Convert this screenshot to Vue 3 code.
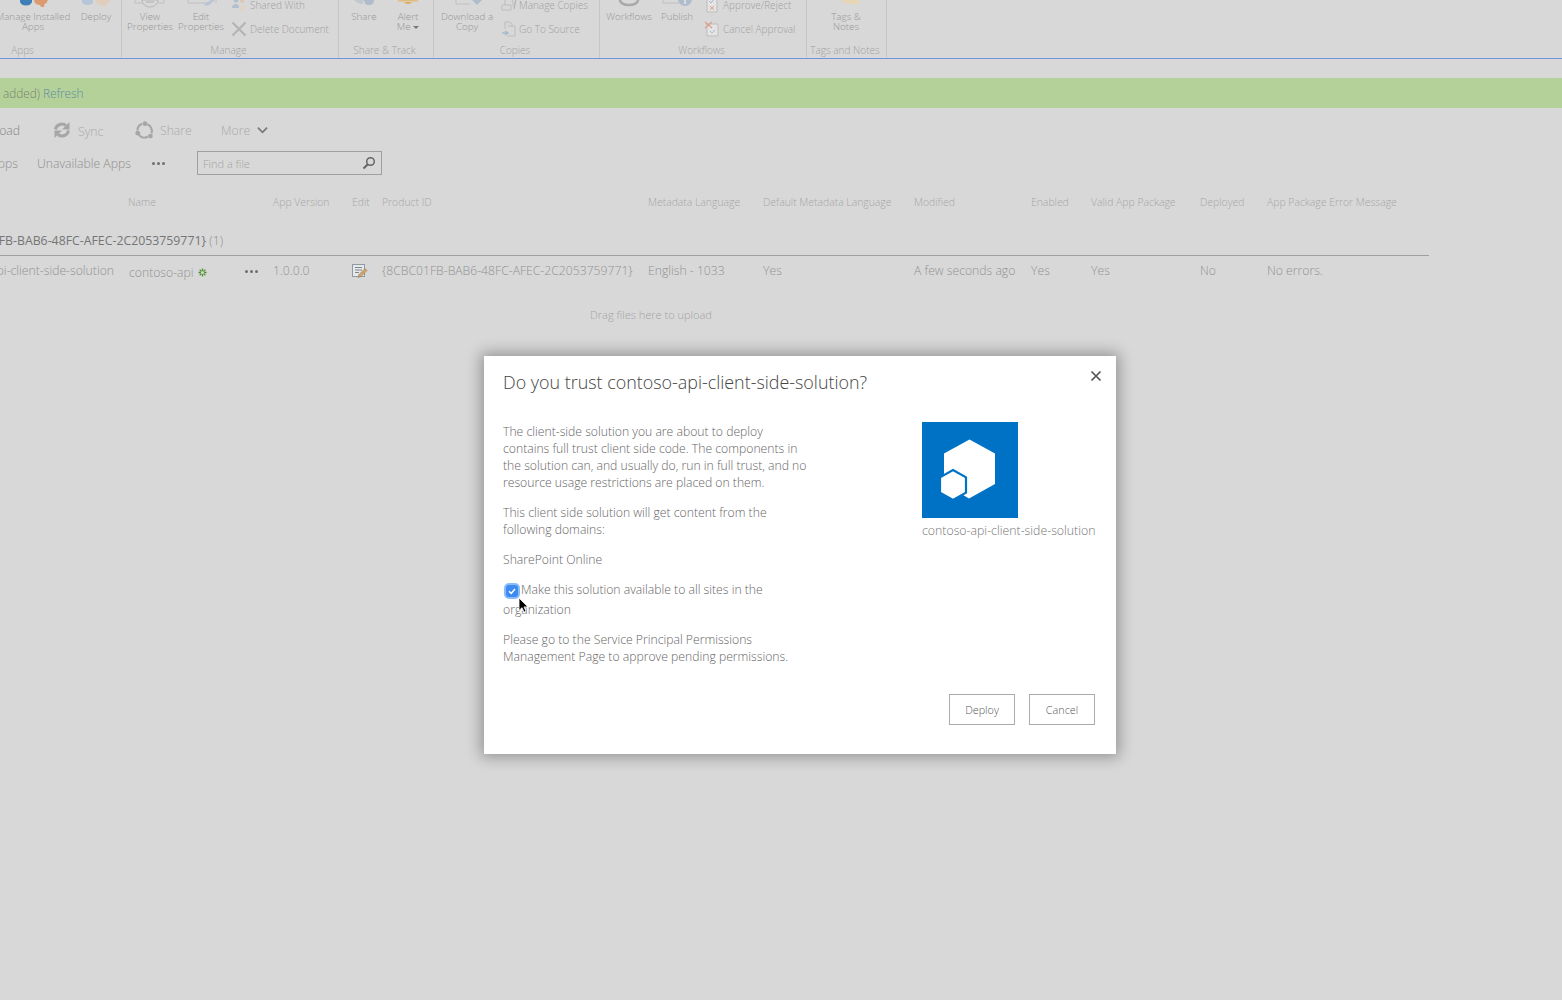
<script setup>
const columns = [
  { label: '', value: 'contoso-api-client-side-solution' },
  { label: 'Name', value: 'contoso-api' },
  { label: 'App Version', value: '1.0.0.0' },
  { label: 'Edit', value: '' },
  { label: 'Product ID', value: '{8CBC01FB-BAB6-48FC-AFEC-2C2053759771}' },
  { label: 'Metadata Language', value: 'English - 1033' },
  { label: 'Default Metadata Language', value: 'Yes' },
  { label: 'Modified', value: 'A few seconds ago' },
  { label: 'Enabled', value: 'Yes' },
  { label: 'Valid App Package', value: 'Yes' },
  { label: 'Deployed', value: 'No' },
  { label: 'App Package Error Message', value: 'No errors.' },
]
</script>

<template>
  <div class="page">
    <header class="ribbon">
      <section class="group g-apps">
        <div class="items">
          <div class="large w-manage">
            <svg class="top-icon" viewBox="0 0 32 10"><path d="M3 0h12v1.500a6 4 0 0 1-12 0z" fill="#3f7fb8"/><path d="M17 0h14l-1.500 3-2 1-.5 3h-3l-1-2-3-.5-2-1.500z" fill="#dc9a70"/></svg>
            <span class="cap nowrap">Manage Installed<br>Apps</span>
          </div>
          <div class="large w-deploy">
            <svg class="top-icon" viewBox="0 0 32 10"><path d="M2 0h11v2a5.500 3 0 0 1-11 0z" fill="#b4c6d8"/><path d="M15 0h15l-1.500 3-2 1-.5 2.500h-3l-1-1.500-3-.5-2-1.500z" fill="#e0cdbc"/></svg>
            <span class="cap">Deploy</span>
          </div>
        </div>
        <div class="name">Apps</div>
      </section>

      <section class="group g-manage">
        <div class="items">
          <div class="large w-view">
            <svg class="top-icon" viewBox="0 0 32 10"><path d="M1 0v3h12M30 0v3H24" fill="none" stroke="#c0c0c0"/><path d="M8 0a8 7 0 0 0 16 0z" fill="#d8d8d8" stroke="#b8b8b8"/><path d="M12 2h8" stroke="#b0b0b0"/></svg>
            <span class="cap">View<br>Properties</span>
          </div>
          <div class="large w-edit">
            <svg class="top-icon" viewBox="0 0 32 10"><path d="M3 0v3h20M31 0v3" fill="none" stroke="#c0c0c0"/><path d="M19 6l2-3 5-3h4l-6 5z" fill="#b9c5d4"/></svg>
            <span class="cap">Edit<br>Properties</span>
          </div>
          <div class="stack">
            <div class="small">
              <svg class="small-icon" viewBox="0 0 16 16"><circle cx="5" cy="3" r="2.500" fill="#b3bfcc"/><path d="M1 11c0-3 2-4 4-4s3 1 3 4z" fill="#b3bfcc"/><circle cx="11" cy="4" r="2" fill="#dcc9b5"/><path d="M8 13l5-6 2 1-5 6z" fill="#e2d3bf"/></svg>
              <span>Shared With</span>
            </div>
            <div class="small">
              <svg class="small-icon" viewBox="0 0 16 16"><path d="M1.500 1.500l13 13M14.500 1.500l-13 13" stroke="#b4b4b4" stroke-width="2.200"/></svg>
              <span>Delete Document</span>
            </div>
          </div>
        </div>
        <div class="name">Manage</div>
      </section>

      <section class="group g-share">
        <div class="items">
          <div class="large w-sh">
            <svg class="top-icon" viewBox="0 0 32 10"><path d="M6 0c2 2 5 4 9 4 0-2 0-3 1-4z" fill="#c2c8ce"/><path d="M16 0h10c0 3-2 5-5 5s-5-2-5-5z" fill="#aebccb"/></svg>
            <span class="cap">Share</span>
          </div>
          <div class="large w-alert">
            <svg class="top-icon" viewBox="0 0 32 10"><path d="M7 0h18l2 1.500H5z" fill="#e0bd7c"/><path d="M12 2h8l-2 2h-4z" fill="#d9b16a"/></svg>
            <span class="cap">Alert<br>Me <i class="caret"></i></span>
          </div>
        </div>
        <div class="name">Share &amp; Track</div>
      </section>

      <section class="group g-copies">
        <div class="items">
          <div class="large w-dl">
            <svg class="top-icon" viewBox="0 0 32 10"><path d="M5 0v4h14" fill="none" stroke="#c0c0c0"/><path d="M21 0h10l-5 5z" fill="#aebccb"/></svg>
            <span class="cap nowrap">Download a<br>Copy</span>
          </div>
          <div class="stack">
            <div class="small tight">
              <svg class="small-icon" viewBox="0 0 16 16"><path d="M1 13V8h9v5zM4 8V2h6l2 2v5" fill="none" stroke="#bdbdbd"/><path d="M13 12l2-10" stroke="#b4b4b4" stroke-width="1.300"/></svg>
              <span>Manage Copies</span>
            </div>
            <div class="small tight">
              <svg class="small-icon" viewBox="0 0 16 16"><path d="M4 8V1h5l2 2v3M7 5h7v10H6" fill="none" stroke="#bdbdbd"/><path d="M1 12h5M4 10l3 2-3 2" fill="none" stroke="#a8b9cc" stroke-width="1.400"/></svg>
              <span>Go To Source</span>
            </div>
          </div>
        </div>
        <div class="name">Copies</div>
      </section>

      <section class="group g-flows">
        <div class="items">
          <div class="large w-wf">
            <svg class="top-icon" viewBox="0 0 32 10"><path d="M7 0a9 5 0 0 0 18 0" fill="none" stroke="#a9a9a9" stroke-width="2.500"/></svg>
            <span class="cap">Workflows</span>
          </div>
          <div class="large w-pub">
            <svg class="top-icon" viewBox="0 0 32 10"><path d="M2 0v3h16" fill="none" stroke="#c0c0c0"/><circle cx="24" cy="-1" r="7" fill="#aebccb"/><path d="M24 0v4" stroke="#e6e6e6" stroke-width="1.500"/></svg>
            <span class="cap">Publish</span>
          </div>
          <div class="stack">
            <div class="small wide">
              <svg class="small-icon" viewBox="0 0 16 16"><path d="M3 2h10v13H3z" fill="#e4e4e4" stroke="#bdbdbd"/><path d="M5 4l2 2 3-4" fill="none" stroke="#a8b9cc"/><path d="M6 9l4 4M10 9l-4 4" stroke="#dba08c"/></svg>
              <span>Approve/Reject</span>
            </div>
            <div class="small wide">
              <svg class="small-icon" viewBox="0 0 16 16"><path d="M3 3h11v12H3z" fill="#e4e4e4" stroke="#bdbdbd"/><path d="M1 1l7 6M8 1L1 7" stroke="#dba08c" stroke-width="1.300"/><path d="M6 10l2 2 3-3" fill="none" stroke="#a8b9cc"/></svg>
              <span>Cancel Approval</span>
            </div>
          </div>
        </div>
        <div class="name">Workflows</div>
      </section>

      <section class="group g-tags">
        <div class="items">
          <div class="large w-tags">
            <svg class="top-icon" viewBox="0 0 32 10"><path d="M2 0h8l6 3V0z" fill="#e4d5b8"/><path d="M16 0h13v4H16z" fill="#e6d6b4"/></svg>
            <span class="cap">Tags &amp;<br>Notes</span>
          </div>
        </div>
        <div class="name nowrap">Tags and Notes</div>
      </section>
    </header>

    <div class="notice">
      <span class="clip-left notice-left">added)</span>
      <a class="link">Refresh</a>
    </div>

    <div class="commands">
      <span class="clip-left cmd-upload">Upload</span>
      <span class="cmd cmd-sync">
        <svg class="cmd-icon" viewBox="0 0 18 18">
          <path d="M2.500 8.500A6.500 6.500 0 0 1 13 4.500" fill="none" stroke="#a6a6a6" stroke-width="3"/>
          <path d="M16.500 1v7.500H9z" fill="#a6a6a6"/>
          <path d="M15.500 9.500A6.500 6.500 0 0 1 5 13.500" fill="none" stroke="#a6a6a6" stroke-width="3"/>
          <path d="M1.500 17V9.500H9z" fill="#a6a6a6"/>
        </svg>
        <span class="sync-text">Sync</span>
      </span>
      <span class="cmd cmd-share">
        <svg class="cmd-icon share-icon" viewBox="0 0 20 20">
          <path d="M13 3.500A7.500 7.500 0 0 1 17.300 13M13.500 16.600A7.500 7.500 0 0 1 4.200 14.500M2.600 10A7.500 7.500 0 0 1 7.500 3" fill="none" stroke="#a6a6a6" stroke-width="2.200"/>
          <circle cx="10.500" cy="2.800" r="2.500" fill="#a6a6a6"/>
          <circle cx="2.900" cy="12.800" r="2.500" fill="#a6a6a6"/>
          <circle cx="16.200" cy="15.800" r="2.500" fill="#a6a6a6"/>
        </svg>
        <span class="faint">Share</span>
      </span>
      <span class="cmd cmd-more">
        <span class="faint">More</span>
        <svg class="chev" viewBox="0 0 12 8"><path d="M1 1.500l5 5 5-5" fill="none" stroke="#777" stroke-width="1.800"/></svg>
      </span>
    </div>

    <div class="tabs">
      <span class="clip-left tab-apps">Apps</span>
      <span class="tab-un">Unavailable Apps</span>
      <span class="dots tab-dots"><i></i><i></i><i></i></span>
      <div class="search">
        <span>Find a file</span>
        <svg class="lens" viewBox="0 0 14 14"><circle cx="8.500" cy="5.500" r="3.800" fill="none" stroke="#666" stroke-width="1.500"/><path d="M5.800 8.200L1.500 12.500" stroke="#666" stroke-width="2"/></svg>
      </div>
    </div>

    <div class="grid head">
      <span v-for="c in columns" :key="c.label">{{ c.label }}</span>
    </div>

    <div class="group-row">
      <span class="clip-left group-title"><span>Product ID: {8CBC01FB-BAB6-48FC-AFEC-2C2053759771}</span>&nbsp;<em>(1)</em></span>
    </div>

    <div class="grid row">
      <span class="clip-left first-cell">{{ columns[0].value }}</span>
      <span class="name-cell">
        <span class="name-text">contoso-api</span>
        <svg class="new" viewBox="0 0 10 10"><g stroke="#4e8f2f" stroke-width="1.400"><path d="M5 .5v9M.5 5h9M1.800 1.800l6.400 6.400M8.200 1.800L1.800 8.200"/></g><circle cx="5" cy="5" r="1.700" fill="#d8d8d8"/></svg>
        <span class="dots row-dots"><i></i><i></i><i></i></span>
      </span>
      <span>{{ columns[2].value }}</span>
      <span class="edit-cell">
        <svg class="edit" viewBox="0 0 16 15"><rect x=".5" y=".5" width="12" height="12" fill="#e8e8e8" stroke="#8d9aa8"/><path d="M3 3.500h7M3 6h7M3 8.500h4" stroke="#7c8794"/><path d="M6 13.500l1-3 6-6 2 2-6 6z" fill="#d3a468" stroke="#8a7a5c" stroke-width=".6"/></svg>
      </span>
      <span v-for="c in columns.slice(4)" :key="c.label">{{ c.value }}</span>
    </div>

    <div class="drop">Drag files here to upload</div>

    <div class="dialog" role="dialog">
      <svg class="close" viewBox="0 0 12 12"><path d="M1.500 1.500l9 9M10.500 1.500l-9 9" stroke="#555" stroke-width="1.700"/></svg>
      <h1 class="title">Do you trust contoso-api-client-side-solution?</h1>
      <div class="content">
        <div class="copy">
          <p>The client-side solution you are about to deploy contains full trust client side code. The components in the solution can, and usually do, run in full trust, and no resource usage restrictions are placed on them.</p>
          <p>This client side solution will get content from the following domains:</p>
          <p>SharePoint Online</p>
          <p class="check-line">
            <span class="check">
              <svg viewBox="0 0 10 10"><path d="M2 5.200l2.200 2.200L8 3" fill="none" stroke="#fff" stroke-width="1.500"/></svg>
            </span>Make this solution available to all sites in the organization
            <svg class="cursor" viewBox="0 0 11 17"><path d="M1 1v12.500l3-2.800 2 4.500 2-1-2-4.300h4z" fill="#000" stroke="#fff" stroke-width=".8"/></svg>
          </p>
          <p>Please go to the Service Principal Permissions Management Page to approve pending permissions.</p>
        </div>
        <aside class="app">
          <svg class="app-logo" viewBox="0 0 96 96">
            <rect width="96" height="96" fill="#0072c6"/>
            <path d="M47.500 17.500L73 31.500V62L47 76.500 22 62V31.500z" fill="#fff"/>
            <path d="M31 48L44 55.300V70.700L31 78 18 70.700V55.300z" fill="#fff" stroke="#0072c6" stroke-width="2.200"/>
          </svg>
          <div class="app-name">contoso-api-client-side-solution</div>
        </aside>
      </div>
      <div class="actions">
        <button class="btn">Deploy</button>
        <button class="btn">Cancel</button>
      </div>
    </div>
  </div>
</template>

<style>
html, body { margin: 0; background: #d8d8d8; overflow: hidden; }
</style>

<style scoped>
.page {
  position: relative;
  width: 1562px;
  height: 1000px;
  overflow: hidden;
  background: #d8d8d8;
  color: #9a9a9a;
  font-family: "Open Sans", "Noto Sans", sans-serif;
  font-weight: 300;
  font-size: 12px;
}

/* ribbon */
.ribbon { display: flex; height: 58px; border-bottom: 1px solid #6f93dc; }
.group { display: flex; flex-direction: column; border-right: 1px solid #c6c6c6; flex: none; box-sizing: content-box; }
.g-apps { width: 121px; }
.g-manage { width: 216px; }
.g-share { width: 94px; }
.g-copies { width: 165px; }
.g-flows { width: 206px; }
.g-tags { width: 79px; }
.items { display: flex; height: 43px; overflow: visible; }
.name { height: 15px; padding-right: 3px; line-height: 14px; text-align: center; font-size: 10px; color: #a2a2a2; }
.g-apps .name { width: 45px; padding-right: 2px; }
.large { display: flex; flex-direction: column; align-items: center; flex: none; }
.top-icon { width: 32px; height: 10px; flex: none; }
.cap { margin-top: 2px; line-height: 10px; font-size: 9.8px; text-align: center; color: #979797; white-space: nowrap; }
.nowrap { white-space: nowrap; }
.w-manage { width: 66px; }
.w-deploy { width: 32px; margin-left: 14px; }
.w-view { width: 50px; margin-left: 3px; }
.w-edit { width: 50px; margin-left: 1px; }
.w-sh { width: 32px; margin-left: 9px; }
.w-alert { width: 32px; margin-left: 12px; }
.w-dl { width: 54px; margin-left: 6px; }
.w-wf { width: 48px; margin-left: 5px; }
.w-pub { width: 34px; margin-left: 7px; }
.w-tags { width: 32px; margin-left: 23px; }
.stack { display: flex; flex-direction: column; gap: 8px; margin-left: 5px; margin-top: -3px; }
.g-copies .stack { margin-left: 7px; }
.g-flows .stack { margin-left: 10px; }
.small { display: flex; align-items: center; height: 16px; gap: 3px; font-size: 10px; color: #a0a0a0; white-space: nowrap; }
.small.tight { gap: 2px; }
.small.wide { gap: 3px; }
.small-icon { width: 16px; height: 16px; flex: none; }
.caret { display: inline-block; width: 0; height: 0; border: 3px solid transparent; border-top-color: #777; border-bottom: 0; vertical-align: 1px; }

/* notice */
.notice { display: flex; align-items: center; height: 30px; margin-top: 19px; background: #b5d19a; font-size: 11.8px; color: #75826a; }
.notice-left { width: 40px; }
.link { margin-left: 3px; color: #5b8ba0; }

.clip-left { display: flex; justify-content: flex-end; white-space: nowrap; flex: none; }

/* command row */
.commands { display: flex; align-items: center; height: 30px; margin-top: 7px; font-size: 12.2px; }
.cmd-upload { width: 20px; color: #858585; }
.cmd { display: flex; align-items: center; flex: none; }
.cmd-icon { width: 18px; height: 18px; flex: none; }
.cmd-sync { margin-left: 33px; gap: 7px; width: 82px; }
.sync-text { margin-top: 2px; color: #a8a8a8; }
.cmd-share { gap: 6px; width: 86px; }
.share-icon { width: 19px; height: 19px; }
.faint { color: #a8a8a8; }
.cmd-more { gap: 7px; }
.chev { width: 11px; height: 8px; }

/* tabs */
.tabs { display: flex; align-items: center; height: 24px; margin-top: 6px; font-size: 12.2px; color: #8e8e8e; }
.tab-apps { width: 18px; }
.tab-un { margin-left: 19px; width: 94px; white-space: nowrap; }
.dots { display: inline-flex; gap: 2px; align-items: center; }
.dots i { width: 3px; height: 3px; border-radius: 50%; background: #6f6f6f; }
.tab-dots { margin-left: 21px; }
.search {
  display: flex; align-items: center; justify-content: space-between;
  box-sizing: border-box; width: 185px; height: 24px; margin-left: 32px; padding: 0 5px 0 5px;
  border: 1px solid #a0a0a0; font-size: 11px; color: #a4a4a4;
}
.lens { width: 14px; height: 14px; }

/* table */
.grid { display: grid; grid-template-columns: 128px 145px 79px 30px 266px 115px 151px 117px 60px 109px 67px 162px; white-space: nowrap; }
.head { height: 24px; margin-top: 15px; align-items: center; font-size: 10.4px; color: #a6a6a6; }
.group-row { display: flex; align-items: flex-end; width: 1429px; height: 32px; margin-top: 3px; padding-bottom: 6px; border-bottom: 1px solid #a0a0a0; box-sizing: content-box; font-size: 12.3px; color: #757575; font-weight: 400; }
.group-title { width: 223px; line-height: 16px; }
.group-title em { font-style: normal; font-weight: 300; color: #8f8f8f; }
.row { height: 28px; align-items: center; font-size: 12.2px; color: #929292; }
.first-cell { width: 114px; }
.name-cell { display: flex; align-items: center; position: relative; }
.name-text { margin-top: 4px; margin-left: 1px; }
.new { width: 9px; height: 9px; margin-left: 4px; margin-top: 4px; }
.row-dots { margin-left: 38px; margin-top: 3px; }
.edit-cell { display: flex; }
.edit { width: 16px; height: 15px; margin-top: 3px; }
.drop { margin-top: 23px; margin-left: 590px; font-size: 11px; line-height: 16px; color: #a4a4a4; }

/* dialog */
.dialog {
  position: absolute; left: 484px; top: 356px;
  box-sizing: border-box; width: 632px; height: 398px; padding: 13px 21px 0 19px;
  display: flex; flex-direction: column;
  background: #fff; color: #666;
  box-shadow: 0 0 14px 3px rgba(0, 0, 0, .32);
}
.close { position: absolute; right: 14px; top: 14px; width: 12px; height: 12px; }
.title { margin: 0; font-size: 17.9px; font-weight: 300; line-height: 26px; color: #444; white-space: nowrap; }
.content { display: flex; justify-content: space-between; margin-top: 27px; flex: 1; }
.copy { width: 306px; font-size: 12.2px; line-height: 17px; padding-top: 1px; }
.copy p { margin: 0 0 13px; }
.check-line { position: relative; line-height: 20px; margin-bottom: 11px !important; margin-top: -1px !important; }
.check {
  display: inline-flex; align-items: center; justify-content: center; vertical-align: -2px;
  width: 12px; height: 12px; margin: 0 3px 0 3px; background: #3d8bf0; border-radius: 3px;
  box-shadow: 0 0 0 2px #8bbcf8;
}
.check svg { width: 10px; height: 10px; }
.cursor { position: absolute; left: 15px; top: 17px; width: 11px; height: 17px; }
.app { width: 174px; flex: none; margin-right: -1px; }
.app-logo { display: block; width: 96px; height: 96px; }
.app-name { margin-top: 4px; font-size: 12.3px; line-height: 17px; color: #777; white-space: nowrap; }
.actions { display: flex; justify-content: flex-end; gap: 14px; margin-bottom: 29px; }
.btn {
  box-sizing: border-box; width: 66px; height: 31px; padding: 0;
  background: #fff; border: 1px solid #ababab; border-radius: 0;
  font-family: inherit; font-weight: 300; font-size: 10.8px; color: #555;
}
</style>
